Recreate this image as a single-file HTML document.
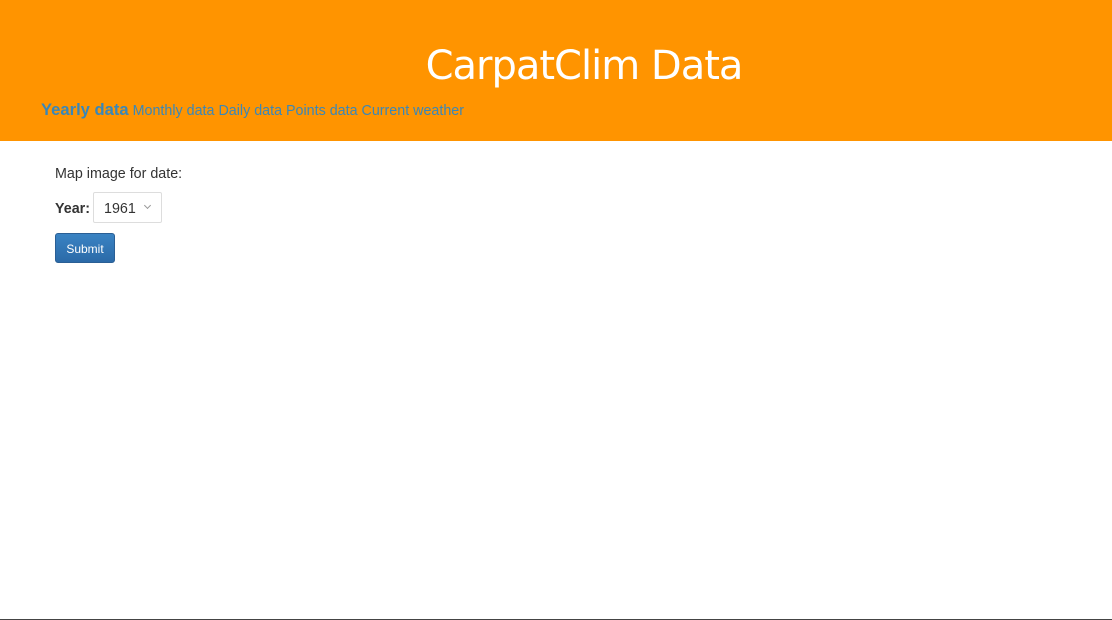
<!DOCTYPE html>
<html><head><style>
body{margin:0;width:1112px;height:620px;overflow:hidden;font-family:"Liberation Sans",sans-serif;background:#fff;position:relative}
.hdr{position:absolute;left:0;top:0;width:1112px;height:141px;background:#ff9400}
.title{position:absolute;left:0;width:1168px;top:41px;text-align:center;color:#fff;font-size:40px;line-height:50px;font-family:"DejaVu Sans","Liberation Sans",sans-serif;font-weight:normal;letter-spacing:-1px}
.nav{position:absolute;left:41px;top:100px;font-size:14.3px;color:#3a87b8;white-space:nowrap}
.nav b{font-size:16.6px}
.lbl{position:absolute;left:55px;top:166px;font-size:14.3px;color:#333}
.yr{position:absolute;left:55px;top:201px;font-size:14.3px;color:#333;font-weight:bold}
.sel{position:absolute;left:93px;top:192px;width:67px;height:29px;border:1px solid #ddd;border-radius:2px;font-size:14.3px;color:#333}
.sel span{position:absolute;left:10px;top:8px}
.sel i{position:absolute;left:51px;top:10px;width:4px;height:4px;border-right:1px solid #999;border-bottom:1px solid #999;transform:rotate(45deg)}
.btn{position:absolute;left:55px;top:233px;width:58px;height:28px;background:linear-gradient(#3a83c3,#2b6aa8);border:1px solid #2a5f95;border-radius:3px;color:#fff;font-size:12px;text-align:center;line-height:30px}
.bl{position:absolute;left:0;top:619px;width:1112px;height:1px;background:#444}
</style></head><body>
<div class="hdr"><div class="title">CarpatClim Data</div>
<div class="nav"><b>Yearly data</b> Monthly data Daily data Points data Current weather</div></div>
<div class="lbl">Map image for date:</div>
<div class="yr">Year:</div>
<div class="sel"><span>1961</span><i></i></div>
<div class="btn">Submit</div>
<div class="bl"></div>
</body></html>
